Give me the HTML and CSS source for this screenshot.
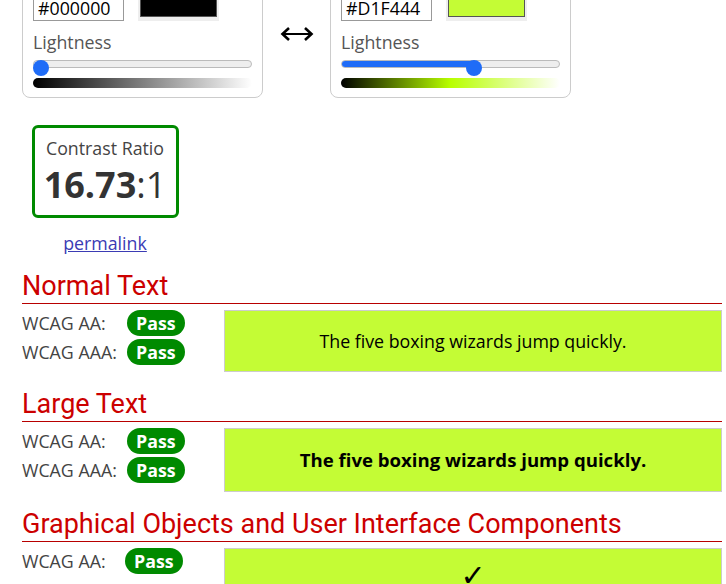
FILE: index.html
```html
<!DOCTYPE html>
<html lang="en">
<head>
<meta charset="utf-8">
<title>Contrast Checker</title>
<link rel="stylesheet" href="styles.css">
</head>
<body>
<div class="page">
  <div class="pickers">
    <div class="panel">
      <div class="color-row">
        <input class="hex" type="text" value="#000000" aria-label="Foreground color">
        <div class="swatch"><div class="swatch-fill fg"></div></div>
      </div>
      <div class="label">Lightness</div>
      <div class="slider">
        <div class="track"><div class="fill" style="width:0px"></div></div>
        <div class="thumb" style="left:0px"></div>
      </div>
      <div class="gradient gray"></div>
    </div>
    <div class="swap">
      <svg width="36" height="16" viewBox="0 0 36 16" aria-hidden="true">
        <path d="M4 8 H32" stroke="#000" stroke-width="2" fill="none"/>
        <path d="M10 2 L3.5 8 L10 14" stroke="#000" stroke-width="2.6" fill="none"/>
        <path d="M26 2 L32.5 8 L26 14" stroke="#000" stroke-width="2.6" fill="none"/>
      </svg>
    </div>
    <div class="panel">
      <div class="color-row">
        <input class="hex" type="text" value="#D1F444" aria-label="Background color">
        <div class="swatch"><div class="swatch-fill bg"></div></div>
      </div>
      <div class="label">Lightness</div>
      <div class="slider">
        <div class="track"><div class="fill" style="width:134px"></div></div>
        <div class="thumb" style="left:125px"></div>
      </div>
      <div class="gradient lime"></div>
    </div>
  </div>

  <div class="ratio-col">
    <div class="ratio-box">
      <div class="ratio-label">Contrast Ratio</div>
      <div class="ratio"><strong>16.73</strong>:1</div>
    </div>
    <a class="permalink" href="#">permalink</a>
  </div>

  <section class="result">
    <h2>Normal Text</h2>
    <div class="result-body">
      <div class="checks">
        <div class="check-row"><span>WCAG AA:</span><span class="badge">Pass</span></div>
        <div class="check-row"><span>WCAG AAA:</span><span class="badge">Pass</span></div>
      </div>
      <div class="sample">The five boxing wizards jump quickly.</div>
    </div>
  </section>

  <section class="result">
    <h2>Large Text</h2>
    <div class="result-body">
      <div class="checks">
        <div class="check-row"><span>WCAG AA:</span><span class="badge">Pass</span></div>
        <div class="check-row"><span>WCAG AAA:</span><span class="badge">Pass</span></div>
      </div>
      <div class="sample large">The five boxing wizards jump quickly.</div>
    </div>
  </section>

  <section class="result">
    <h2>Graphical Objects and User Interface Components</h2>
    <div class="result-body">
      <div class="checks narrow">
        <div class="check-row"><span>WCAG AA:</span><span class="badge">Pass</span></div>
      </div>
      <div class="sample graphic"><span class="checkmark">✓</span></div>
    </div>
  </section>
</div>
</body>
</html>
```
FILE: styles.css
```css
* { box-sizing: border-box; }
html, body { margin: 0; padding: 0; background: #fff; }
body {
  font-family: "Open Sans", "Liberation Sans", sans-serif;
  font-size: 17.8px;
  line-height: 24px;
  color: #444;
}
.page {
  margin-top: -18px;
  padding: 0 4px 40px 22px;
}

/* pickers */
.pickers { display: flex; align-items: flex-start; }
.panel {
  width: 241px;
  border: 1px solid #ccc;
  border-radius: 8px;
  padding: 12px 10px 9px;
}
.color-row { display: flex; align-items: flex-start; gap: 14px; }
.hex {
  width: 91px;
  height: 26px;
  border: 1px solid #999;
  padding: 0 4px;
  margin: 0;
  font-family: "Open Sans", "Liberation Sans", sans-serif;
  font-size: 17.8px;
  color: #000;
  background: #fff;
}
.swatch {
  width: 81px;
  height: 26px;
  background: #eee;
  padding: 2px 2px 4px;
}
.swatch-fill { height: 100%; border: 1px solid #555; }
.swatch-fill.fg { background: #000; }
.swatch-fill.bg { background: #c4fc35; }
.label { margin-top: 9px; color: #555; }
.slider { position: relative; height: 16px; margin-top: 6px; }
.track {
  margin-top: 4px;
  height: 8px;
  border: 1px solid #bbb;
  border-radius: 4px;
  background: #eee;
  overflow: hidden;
}
.fill { height: 100%; background: #1f6cf7; }
.thumb {
  position: absolute;
  top: 0;
  width: 16px;
  height: 16px;
  border-radius: 50%;
  background: #1f6cf7;
}
.gradient { height: 10px; margin-top: 2px; border-radius: 5px; }
.gradient.gray { background: linear-gradient(to right, #000, #fff); }
.gradient.lime { background: linear-gradient(to right, #000, #b8ff00 50%, #fff); }
.swap {
  width: 67px;
  display: flex;
  justify-content: center;
  margin-top: 44px;
}
.swap svg { display: block; }

/* ratio */
.ratio-col {
  width: 166px;
  margin-top: 27px;
  display: flex;
  flex-direction: column;
  align-items: center;
}
.ratio-box {
  width: 147px;
  border: 3px solid #008a00;
  border-radius: 6px;
  padding: 8px 0 5px;
  text-align: center;
}
.ratio-label { color: #444; }
.ratio { font-size: 36px; line-height: 50px; color: #333; }
.ratio strong { font-weight: 700; }
.permalink { margin-top: 13px; color: #3b3bb4; text-decoration: underline; }

/* results */
.result h2 {
  margin: 17px 0 0;
  font-family: Roboto, "Liberation Sans", sans-serif;
  font-weight: 400;
  font-size: 27px;
  line-height: 30px;
  color: #cc0000;
  padding-bottom: 2px;
  border-bottom: 1px solid #b80000;
}
.ratio-col + .result h2 { margin-top: 16px; }
.result-body {
  margin-top: 6px;
  display: grid;
  grid-template-columns: 202px 1fr;
  align-items: start;
}
.checks { display: flex; flex-direction: column; gap: 3px; }
.check-row {
  display: grid;
  grid-template-columns: 105px auto;
  align-items: center;
  height: 26px;
}
.checks.narrow .check-row { grid-template-columns: 103px auto; }
.badge {
  justify-self: start;
  height: 26px;
  line-height: 26px;
  padding: 0 9px;
  border-radius: 13px;
  background: #008a00;
  color: #fff;
  font-weight: 700;
}
.sample {
  border: 1px solid #ccc;
  background: #c4fc35;
  color: #000;
  text-align: center;
  padding: 18px;
}
.sample.large { font-weight: 700; font-size: 18.6px; line-height: 26px; }
.sample.graphic { padding-top: 10px; min-height: 80px; }
.checkmark {
  font-family: "DejaVu Sans", sans-serif;
  font-size: 30px;
  line-height: 34px;
  color: #000;
}
```
